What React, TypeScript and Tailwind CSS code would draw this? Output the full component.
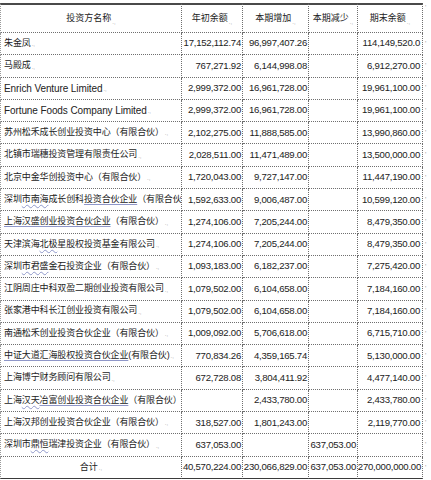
import React from "react";

type Seg = [string, "" | "w" | "l"];
type Row = { name: Seg[]; a: string; b: string; c: string; d: string; en?: boolean; nomark?: boolean };

const rows: Row[] = [
  { name: [["朱金凤", ""]], a: "17,152,112.74", b: "96,997,407.26", c: "", d: "114,149,520.0" },
  { name: [["马殿成", ""]], a: "767,271.92", b: "6,144,998.08", c: "", d: "6,912,270.00" },
  { name: [["Enrich Venture Limited", ""]], a: "2,999,372.00", b: "16,961,728.00", c: "", d: "19,961,100.00", en: true },
  { name: [["Fortune Foods Company Limited", ""]], a: "2,999,372.00", b: "16,961,728.00", c: "", d: "19,961,100.00", en: true },
  { name: [["苏州松禾成长创业投资中心（有限合伙）", ""]], a: "2,102,275.00", b: "11,888,585.00", c: "", d: "13,990,860.00" },
  { name: [["北镇市瑞穗投资管理有限责任公司", ""]], a: "2,028,511.00", b: "11,471,489.00", c: "", d: "13,500,000.00" },
  { name: [["北京中金华创投资中心（有限合伙）", ""]], a: "1,720,043.00", b: "9,727,147.00", c: "", d: "11,447,190.00" },
  { name: [["深圳", ""], ["市南海", "w"], ["成长创科", ""], ["投资合伙企业", "l"], ["（有限合伙", ""]], a: "1,592,633.00", b: "9,006,487.00", c: "", d: "10,599,120.00", nomark: true },
  { name: [["上海汉盛创业投资合伙企业", "l"], ["（有限合伙）", ""]], a: "1,274,106.00", b: "7,205,244.00", c: "", d: "8,479,350.00" },
  { name: [["天津滨海", ""], ["北极", "w"], ["星股权投资基金有限公司", ""]], a: "1,274,106.00", b: "7,205,244.00", c: "", d: "8,479,350.00" },
  { name: [["深圳", ""], ["市君盛", "w"], ["金石投资企业（有限合伙）", ""]], a: "1,093,183.00", b: "6,182,237.00", c: "", d: "7,275,420.00" },
  { name: [["江阴周庄中科双盈二期创业投资有限公司", ""]], a: "1,079,502.00", b: "6,104,658.00", c: "", d: "7,184,160.00" },
  { name: [["张家港中科长江创业投资有限公司", ""]], a: "1,079,502.00", b: "6,104,658.00", c: "", d: "7,184,160.00" },
  { name: [["南通松禾创业投资合伙企业（有限合伙）", ""]], a: "1,009,092.00", b: "5,706,618.00", c: "", d: "6,715,710.00" },
  { name: [["中证大道汇海股权投资合伙企业", "l"], ["(有限合伙)", ""]], a: "770,834.26", b: "4,359,165.74", c: "", d: "5,130,000.00" },
  { name: [["上海博宁财务顾问有限公司", ""]], a: "672,728.08", b: "3,804,411.92", c: "", d: "4,477,140.00" },
  { name: [["上海", ""], ["汉天", "w"], ["冶富创业投资合伙企业", "l"], ["（有限合伙）", ""]], a: "", b: "2,433,780.00", c: "", d: "2,433,780.00", nomark: true },
  { name: [["上海汉邦创业投资合伙企业（有限合伙）", ""]], a: "318,527.00", b: "1,801,243.00", c: "", d: "2,119,770.00" },
  { name: [["深圳市", ""], ["鼎恒", "w"], ["瑞津投资企业（有限合伙）", ""]], a: "637,053.00", b: "", c: "637,053.00", d: "" },
];

const grid = "grid grid-cols-[182px_61px_66px_49px_65px_8px]";
const cellB = "border-r border-b border-dotted border-[#6f6f6f] overflow-hidden whitespace-nowrap flex items-center";
const num = "justify-end pr-[1px] text-[9.6px] tracking-[-0.25px] text-[#222222]";
const font = { fontFamily: "'Liberation Sans', 'Noto Sans CJK SC', sans-serif" };

function Mark() {
  return <span className="text-[6px] text-[#9a9a9a] ml-[1px] self-end mb-[5px]">.,</span>;
}

function Seg({ s }: { s: Seg }) {
  if (s[1] === "w")
    return <span className="underline decoration-wavy decoration-[#8f97c9] decoration-1 underline-offset-[2px]">{s[0]}</span>;
  if (s[1] === "l")
    return <span className="underline decoration-[#8f97c9] decoration-1 underline-offset-[2px]">{s[0]}</span>;
  return <span>{s[0]}</span>;
}

export default function App() {
  return (
    <div className="w-[431px] h-[480px] bg-white pt-[3px] overflow-hidden" style={font}>
      <div className="w-[431px]">
        <div className={grid + " h-[30px]"}>
          <div className={cellB + " justify-center border-t-2 border-t-[#4a4a4a] border-l border-l-[#9a9a9a] text-[9px] text-[#222222]"} style={{ borderTopStyle: "solid" }}>
            投资方名称<Mark />
          </div>
          {["年初余额", "本期增加", "本期减少", "期末余额"].map((h) => (
            <div key={h} className={cellB + " justify-center border-t-2 border-t-[#4a4a4a] text-[9px] text-[#222222]"} style={{ borderTopStyle: "solid" }}>
              {h}
              <Mark />
            </div>
          ))}
          <div className="flex items-start pl-[2px] text-[7px] text-[#aaa]">'</div>
        </div>
        {rows.map((r, i) => (
          <div key={i} className={grid + " h-[22.3px]"}>
            <div
              className={cellB + " pl-[3px] border-l border-l-[#9a9a9a] text-[#222222] " + (r.en ? "text-[10px] tracking-[-0.1px]" : "text-[9px] tracking-[-0.12px]")}
            >
              {r.name.map((s, k) => (
                <Seg key={k} s={s} />
              ))}
              {!r.nomark && <Mark />}
            </div>
            <div className={cellB + " " + num}>{r.a}</div>
            <div className={cellB + " " + num}>{r.b}</div>
            <div className={cellB + " " + num}>{r.c}</div>
            <div className={cellB + " " + num + " pr-[2px]"}>{r.d}</div>
            <div className="flex items-center pl-[2px] text-[7px] text-[#9a9a9a]">'</div>
          </div>
        ))}
        <div className={grid + " h-[22.3px]"}>
          <div className={cellB + " justify-center border-b-[#3a3a3a] border-l border-l-[#9a9a9a] text-[9px] text-[#222222]"} style={{ borderBottomStyle: "solid" }}>
            合计<Mark />
          </div>
          {["40,570,224.00", "230,066,829.00", "637,053.00", "270,000,000.00"].map((v, k) => (
            <div key={k} className={cellB + " " + num + " border-b-[#3a3a3a]"} style={{ borderBottomStyle: "solid" }}>
              {v}
            </div>
          ))}
          <div className="flex items-center pl-[2px] text-[7px] text-[#9a9a9a]">'</div>
        </div>
      </div>
    </div>
  );
}
